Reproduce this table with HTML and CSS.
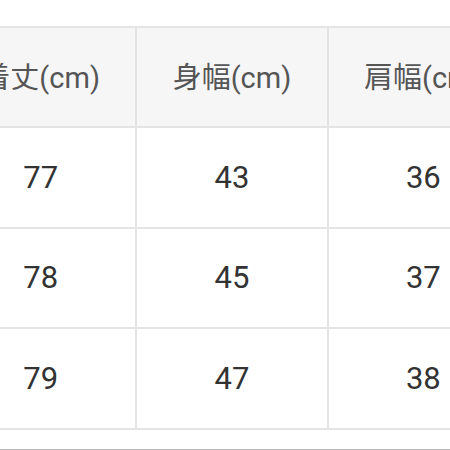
FILE: index.html
```html
<!DOCTYPE html>
<html lang="ja">
<head>
<meta charset="utf-8">
<link rel="stylesheet" href="styles.css">
</head>
<body>
<div class="page">
  <table class="size-table">
    <thead>
      <tr><th>着丈(cm)</th><th>身幅(cm)</th><th>肩幅(cm)</th></tr>
    </thead>
    <tbody>
      <tr><td>77</td><td>43</td><td>36</td></tr>
      <tr><td>78</td><td>45</td><td>37</td></tr>
      <tr><td>79</td><td>47</td><td>38</td></tr>
    </tbody>
  </table>
  <div class="divider"></div>
</div>
</body>
</html>
```
FILE: styles.css
```css
html, body {
  margin: 0;
  padding: 0;
  background: #ffffff;
}
body {
  width: 450px;
  height: 450px;
  overflow: hidden;
  font-family: Roboto, "Noto Sans CJK JP", sans-serif;
}
.page {
  padding-top: 26px;
  width: 450px;
}
.size-table {
  margin-left: -56px;
  border-collapse: collapse;
  table-layout: fixed;
  width: 576px;
}
.size-table th,
.size-table td {
  border: 2px solid #e4e4e4;
  padding: 0;
  text-align: center;
  vertical-align: middle;
}
.size-table th {
  height: 96px;
  background: #f6f6f6;
  color: #555555;
  font-weight: normal;
  font-size: 29px;
  line-height: 1;
  padding-top: 2px;
}
.size-table td {
  height: 98.5px;
  color: #333333;
  font-size: 31px;
}
.divider {
  margin-top: 19px;
  height: 2px;
  background: #bdbdbd;
}
```
